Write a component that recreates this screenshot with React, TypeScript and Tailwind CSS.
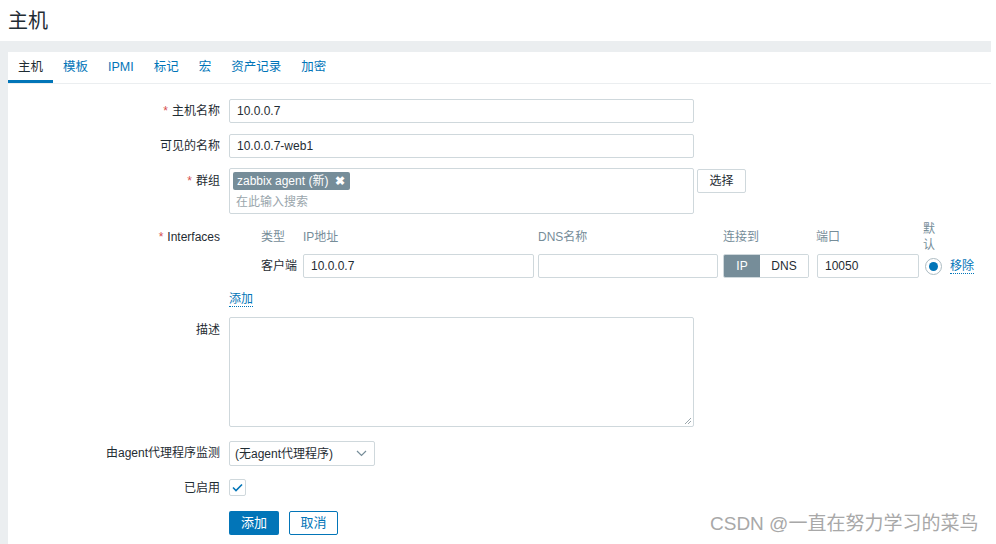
import React from "react";

const F = { fontFamily: '"Liberation Sans", Arial, "Noto Sans CJK SC", sans-serif' };

function Label({ children, req, pt = "pt-[5px]" }: { children: React.ReactNode; req?: boolean; pt?: string }) {
  return (
    <div className={`w-[212px] shrink-0 text-right leading-[14px] text-[12px] text-[#1f2c33] ${pt}`}>
      {req && <span className="text-[#d64e4e] mr-[4px]">*</span>}
      {children}
    </div>
  );
}

function Input({ value, w, h = "h-[24px]" }: { value?: string; w: string; h?: string }) {
  return (
    <div className={`${w} ${h} border border-[#cfd8dc] rounded-[2px] bg-white flex items-center px-[7px] text-[12px] text-[#1f2c33]`}>
      {value}
    </div>
  );
}

export default function App() {
  const tabs = ["主机", "模板", "IPMI", "标记", "宏", "资产记录", "加密"];
  return (
    <div className="w-[996px] h-[544px] bg-white relative overflow-hidden flex flex-col" style={F}>
      <div className="h-[41px] shrink-0 flex items-center pl-[8px] text-[20px] text-[#1f2c33]">主机</div>
      <div className="flex-1 flex">
        <div className="w-[991px] bg-[#ebeef0] pt-[11px] pl-[8px] flex flex-col">
          <div className="flex-1 bg-white flex flex-col">
            {/* tabs */}
            <div className="h-[32px] flex border-b border-[#ebeef0] shrink-0">
              {tabs.map((t, i) => (
                <div
                  key={t}
                  className={`px-[10px] flex items-center text-[12.5px] border-b-[3px] ${
                    i === 0 ? "border-[#0275b8] text-[#1f2c33]" : "border-transparent text-[#0275b8]"
                  }`}
                >
                  <span className="pt-[3px]">{t}</span>
                </div>
              ))}
            </div>

            <div className="flex flex-col pt-[15px]">
              {/* host name */}
              <div className="flex">
                <Label req>主机名称</Label>
                <div className="ml-[9px]">
                  <Input value="10.0.0.7" w="w-[465px]" />
                </div>
              </div>
              <div className="flex mt-[11px]">
                <Label>可见的名称</Label>
                <div className="ml-[9px]">
                  <Input value="10.0.0.7-web1" w="w-[465px]" />
                </div>
              </div>
              <div className="flex mt-[10px]">
                <Label req pt="pt-[6px]">群组</Label>
                <div className="ml-[9px] flex items-start">
                  <div className="w-[465px] h-[46px] border border-[#cfd8dc] rounded-[2px] p-[3px] flex flex-col">
                    <div className="self-start h-[18px] bg-[#768d99] rounded-[2px] text-white text-[12px] flex items-center pl-[4px] pr-[5px]">
                      zabbix agent (新)
                      <span className="ml-[7px] text-[12px] font-bold">✖</span>
                    </div>
                    <div className="text-[12px] text-[#9aa6ac] pl-[3px] mt-[5px] leading-[15px]">在此输入搜索</div>
                  </div>
                  <div className="ml-[3px] mt-[1px] w-[49px] h-[24px] border border-[#cfd8dc] rounded-[2px] bg-white flex items-center justify-center text-[12px] text-[#1f2c33]">
                    选择
                  </div>
                </div>
              </div>

              {/* interfaces */}
              <div className="flex mt-[6px]">
                <Label req pt="pt-[10px]">Interfaces</Label>
                <div className="ml-[9px] pl-[32px] flex flex-col">
                  <div className="flex items-center h-[33px] text-[12px] text-[#768d99]">
                    <div className="w-[42px]">类型</div>
                    <div className="w-[235px]">IP地址</div>
                    <div className="w-[185px]">DNS名称</div>
                    <div className="w-[93px]">连接到</div>
                    <div className="w-[107px]">端口</div>
                    <div className="w-[14px] leading-[16px]">默认</div>
                  </div>
                  <div className="flex items-center mt-[1px]">
                    <div className="w-[42px] text-[12px] text-[#1f2c33]">客户端</div>
                    <Input value="10.0.0.7" w="w-[231px]" />
                    <div className="ml-[4px]">
                      <Input w="w-[180px]" />
                    </div>
                    <div className="ml-[5px] flex h-[24px] text-[12px] rounded-[2px] overflow-hidden border border-[#cfd8dc]">
                      <div className="w-[36px] bg-[#768d99] text-white flex items-center justify-center">IP</div>
                      <div className="w-[48px] bg-white text-[#1f2c33] flex items-center justify-center">DNS</div>
                    </div>
                    <div className="ml-[8px]">
                      <Input value="10050" w="w-[102px]" />
                    </div>
                    <div className="ml-[6px] w-[17px] h-[17px] rounded-full border border-[#acbbc2] flex items-center justify-center">
                      <div className="w-[9px] h-[9px] rounded-full bg-[#0275b8]" />
                    </div>
                    <div className="ml-[8px] text-[12px] text-[#0275b8] border-b border-dotted border-[#0275b8] leading-[14px]">移除</div>
                  </div>
                </div>
              </div>

              <div className="flex mt-[14px]">
                <div className="w-[212px] shrink-0" />
                <div className="ml-[9px] text-[12px] text-[#0275b8] border-b border-dotted border-[#0275b8] leading-[14px]">添加</div>
              </div>

              {/* description */}
              <div className="flex mt-[10px]">
                <Label pt="pt-[6px]">描述</Label>
                <div className="ml-[9px] relative">
                  <div className="w-[465px] h-[110px] border border-[#cfd8dc] rounded-[2px] bg-white" />
                  <svg className="absolute right-[2px] bottom-[2px]" width="8" height="8" viewBox="0 0 8 8">
                    <path d="M7 1L1 7M7 4L4 7" stroke="#9aa6ac" strokeWidth="1" />
                  </svg>
                </div>
              </div>

              {/* proxy */}
              <div className="flex mt-[14px]">
                <Label>由agent代理程序监测</Label>
                <div className="ml-[9px] w-[146px] h-[25px] border border-[#cfd8dc] rounded-[2px] flex items-center justify-between pl-[5px] pr-[7px] text-[12px] text-[#1f2c33]">
                  <span>(无agent代理程序)</span>
                  <svg width="11" height="7" viewBox="0 0 11 7">
                    <path d="M1 1l4.5 4.5L10 1" fill="none" stroke="#768d99" strokeWidth="1.2" />
                  </svg>
                </div>
              </div>

              {/* enabled */}
              <div className="flex mt-[13px]">
                <Label pt="pt-[2px]">已启用</Label>
                <div className="ml-[9px] w-[17px] h-[17px] border border-[#cfd8dc] rounded-[2px] flex items-center justify-center">
                  <svg width="11" height="9" viewBox="0 0 11 9">
                    <path d="M1 4.5l3 3L10 1.5" fill="none" stroke="#0275b8" strokeWidth="1.6" />
                  </svg>
                </div>
              </div>

              {/* buttons */}
              <div className="flex mt-[15px]">
                <div className="w-[212px] shrink-0" />
                <div className="ml-[9px] w-[50px] h-[24px] bg-[#0275b8] rounded-[2px] text-white text-[13px] flex items-center justify-center">添加</div>
                <div className="ml-[10px] w-[49px] h-[24px] border border-[#0275b8] rounded-[2px] bg-white text-[#0275b8] text-[13px] flex items-center justify-center">取消</div>
              </div>
            </div>
          </div>
        </div>
      </div>

      <div
        className="absolute left-[710px] top-[513px] text-[19px] text-[#a8a8a8] leading-[22px]"
        style={{ ...F, textShadow: "1px 1px 0 #fff" }}
      >
        CSDN @一直在努力学习的菜鸟
      </div>
    </div>
  );
}
